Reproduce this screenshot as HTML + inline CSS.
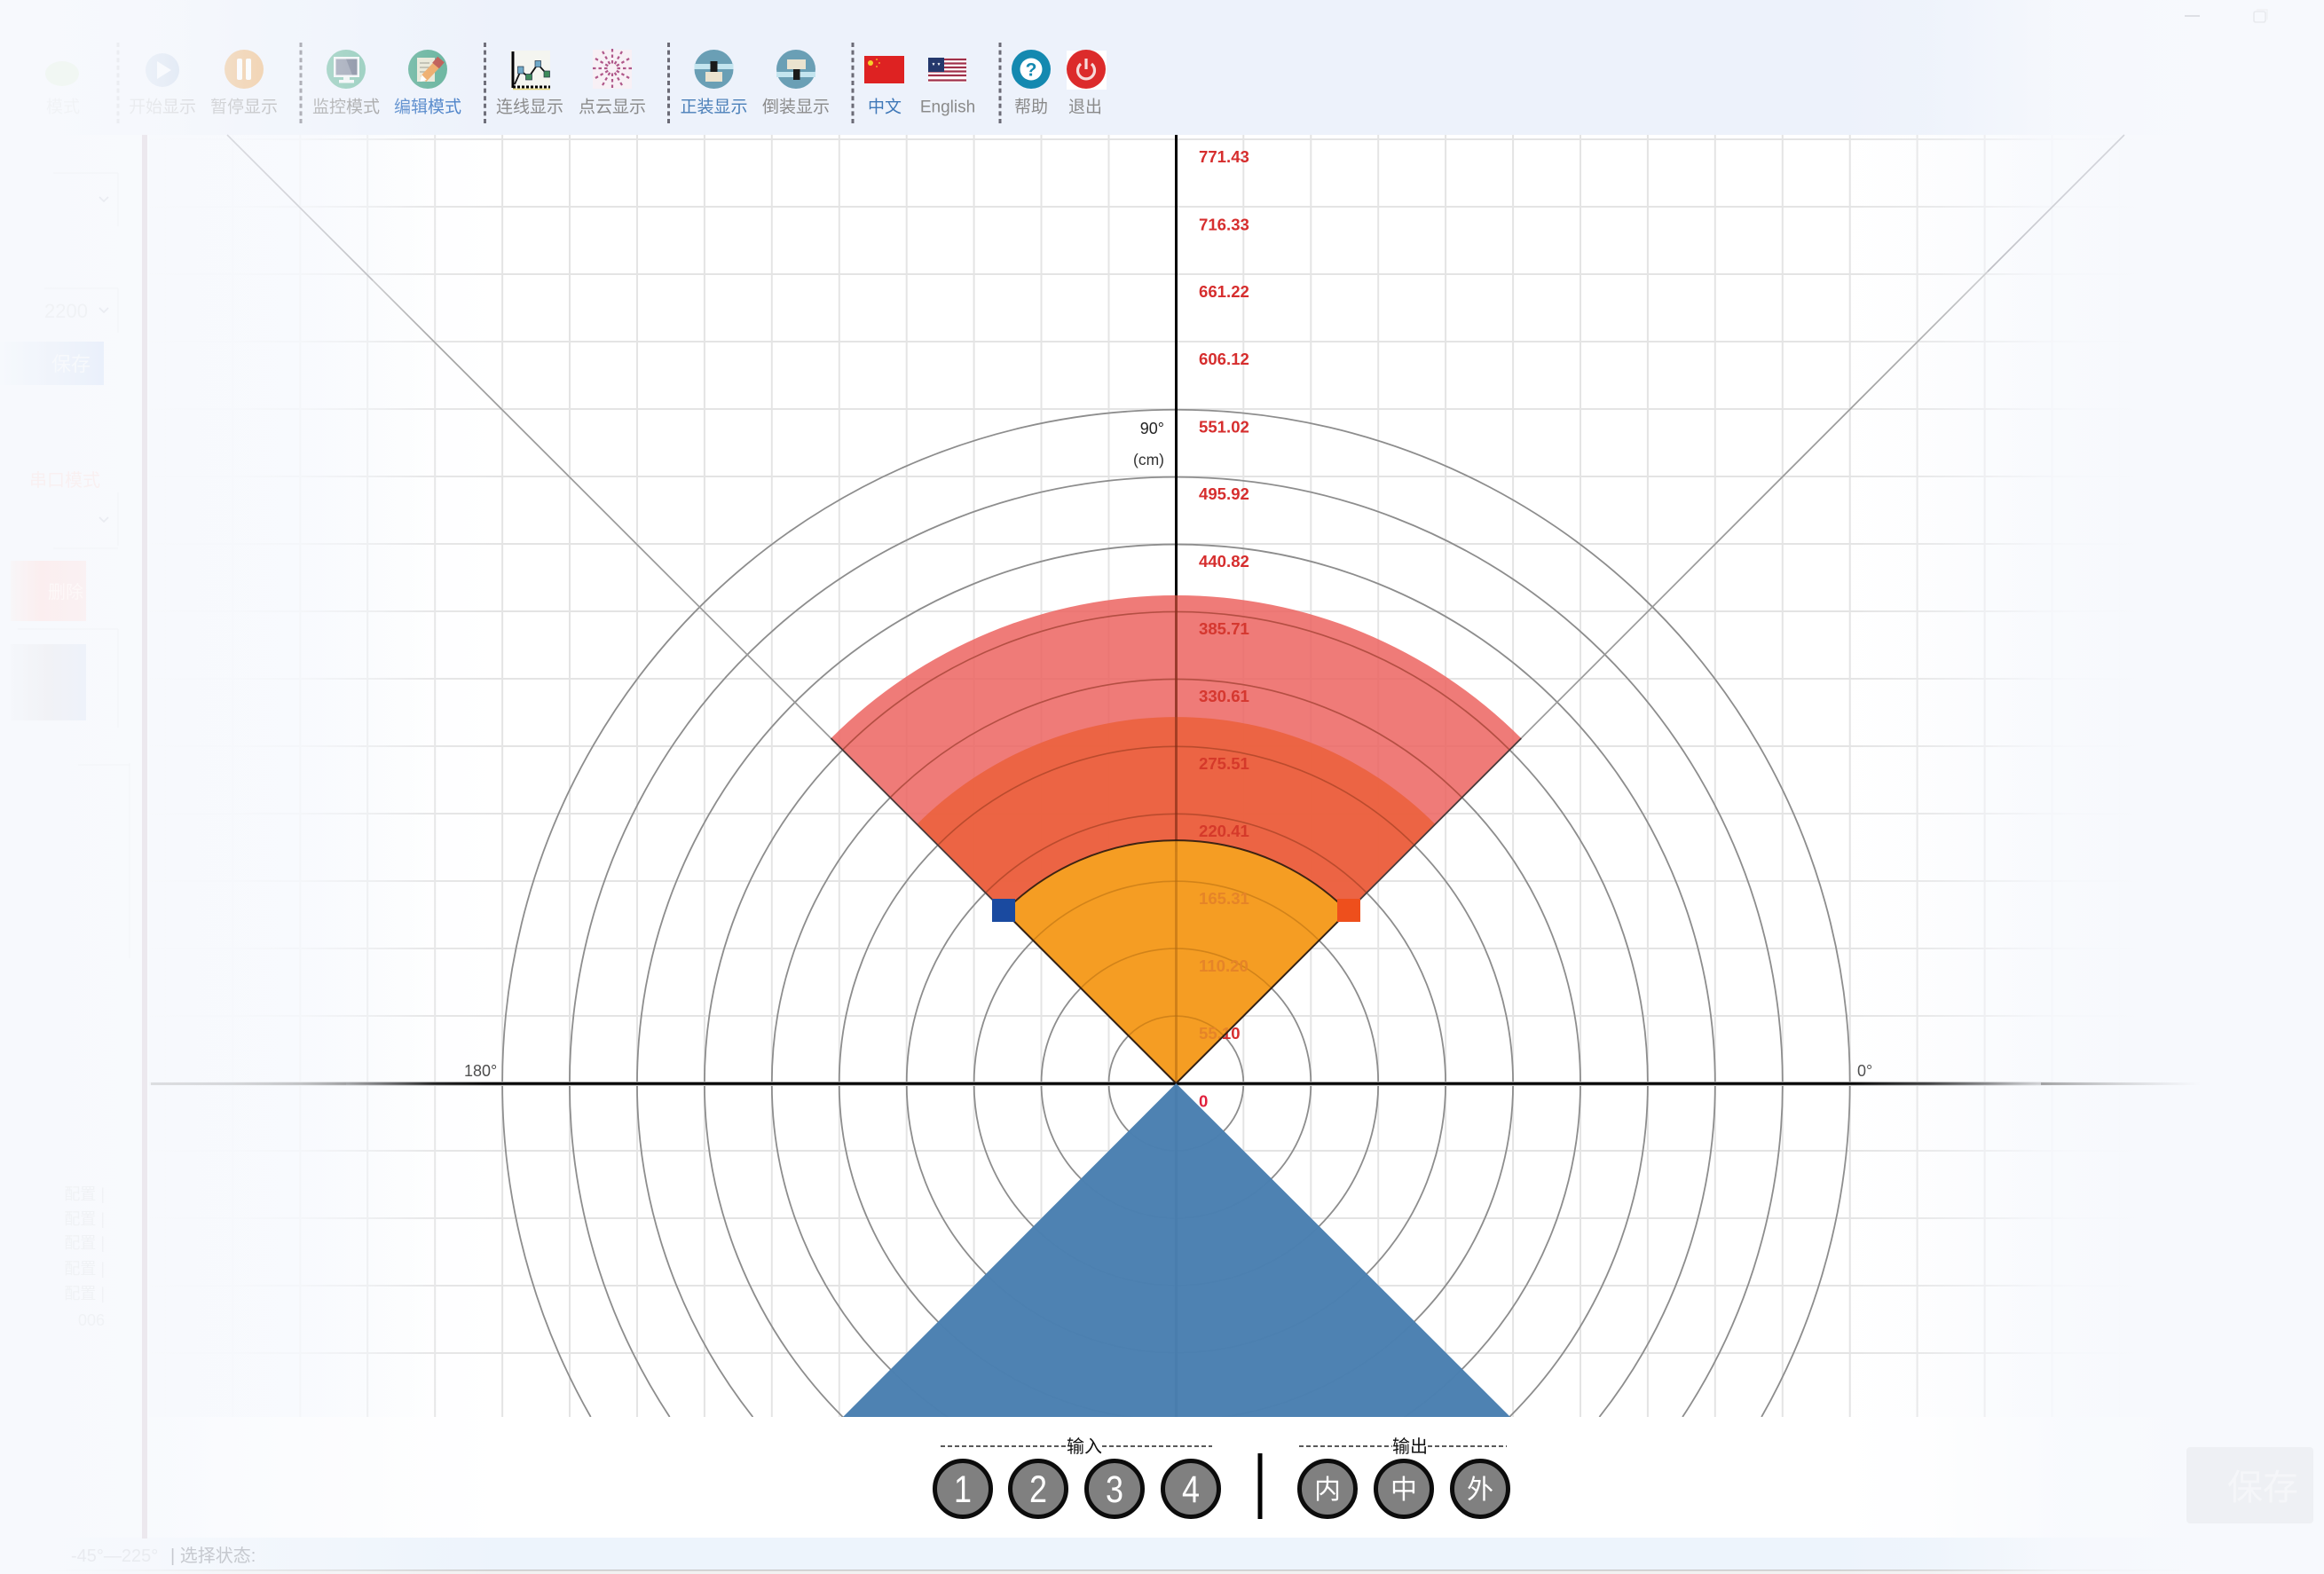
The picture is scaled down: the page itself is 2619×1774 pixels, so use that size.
<!DOCTYPE html>
<html lang="zh-CN">
<head>
<meta charset="utf-8">
<title>雷达显示</title>
<style>
html,body{margin:0;padding:0;background:#f6f9fd;}
body{width:2619px;height:1774px;overflow:hidden;}
svg{display:block;}
text{font-family:"Liberation Sans","Noto Sans CJK SC",sans-serif;}
</style>
</head>
<body>
<svg xmlns="http://www.w3.org/2000/svg" width="2619" height="1774" viewBox="0 0 2619 1774">
<defs>
<clipPath id="chart"><rect x="168" y="152" width="2451" height="1445"/></clipPath>
<clipPath id="outerClip"><path d="M1325.4 1221L936.5 832.1A550 550 0 0 1 1714.3 832.1Z"/></clipPath>
<clipPath id="orangeClip"><path d="M1325.4 1221L1131.7 1027.3A274 274 0 0 1 1519.1 1027.3Z"/></clipPath>
<linearGradient id="fade" x1="0" y1="0" x2="2619" y2="0" gradientUnits="userSpaceOnUse">
<stop offset="0" stop-color="#f7f9fd" stop-opacity="1"/>
<stop offset="0.023" stop-color="#f7f9fd" stop-opacity=".98"/>
<stop offset="0.05" stop-color="#f7f9fd" stop-opacity=".92"/>
<stop offset="0.069" stop-color="#f7f9fd" stop-opacity=".84"/>
<stop offset="0.105" stop-color="#f7f9fd" stop-opacity=".6"/>
<stop offset="0.149" stop-color="#f7f9fd" stop-opacity=".4"/>
<stop offset="0.184" stop-color="#f7f9fd" stop-opacity=".16"/>
<stop offset="0.21" stop-color="#f7f9fd" stop-opacity=".03"/>
<stop offset="0.23" stop-color="#f7f9fd" stop-opacity="0"/>
<stop offset="0.79" stop-color="#f7f9fd" stop-opacity="0"/>
<stop offset="0.83" stop-color="#f7f9fd" stop-opacity=".17"/>
<stop offset="0.86" stop-color="#f7f9fd" stop-opacity=".5"/>
<stop offset="0.885" stop-color="#f7f9fd" stop-opacity=".8"/>
<stop offset="0.93" stop-color="#f7f9fd" stop-opacity=".96"/>
<stop offset="0.97" stop-color="#f7f9fd" stop-opacity="1"/>
<stop offset="1" stop-color="#f7f9fd" stop-opacity="1"/>
</linearGradient>
<linearGradient id="fade2" x1="0" y1="0" x2="2619" y2="0" gradientUnits="userSpaceOnUse">
<stop offset="0.063" stop-color="#f7f9fd" stop-opacity=".9"/>
<stop offset="0.1" stop-color="#f7f9fd" stop-opacity=".86"/>
<stop offset="0.129" stop-color="#f7f9fd" stop-opacity=".7"/>
<stop offset="0.158" stop-color="#f7f9fd" stop-opacity=".33"/>
<stop offset="0.187" stop-color="#f7f9fd" stop-opacity="0"/>
<stop offset="0.796" stop-color="#f7f9fd" stop-opacity="0"/>
<stop offset="0.854" stop-color="#f7f9fd" stop-opacity=".2"/>
<stop offset="0.883" stop-color="#f7f9fd" stop-opacity=".5"/>
<stop offset="0.912" stop-color="#f7f9fd" stop-opacity=".8"/>
<stop offset="0.941" stop-color="#f7f9fd" stop-opacity="1"/>
</linearGradient>
<linearGradient id="axisEnd" x1="0" y1="0" x2="1" y2="0">
<stop offset="0" stop-color="#777" stop-opacity=".55"/>
<stop offset="1" stop-color="#999" stop-opacity="0"/>
</linearGradient>
<linearGradient id="btnBlue" x1="0" y1="0" x2="1" y2="0">
<stop offset="0" stop-color="#f6f9fd"/><stop offset=".5" stop-color="#f0f4fb"/><stop offset="1" stop-color="#eaf0fb"/>
</linearGradient>
<linearGradient id="btnRed" x1="0" y1="0" x2="1" y2="0">
<stop offset="0" stop-color="#f8f6f8"/><stop offset=".4" stop-color="#fbeeef"/><stop offset="1" stop-color="#faf1f3"/>
</linearGradient>
<linearGradient id="btnGray" x1="0" y1="0" x2="1" y2="0">
<stop offset="0" stop-color="#f5f7fb"/><stop offset=".5" stop-color="#f1f2f6"/><stop offset="1" stop-color="#eef2fa"/>
</linearGradient>
</defs>

<!-- base -->
<rect x="0" y="0" width="2619" height="1774" fill="#ffffff"/>

<g clip-path="url(#chart)">
<!-- grid -->
<path fill="none" stroke="#e4e4e4" stroke-width="2" d="M186.4 152V1597M262.4 152V1597M338.3 152V1597M414.2 152V1597M490.2 152V1597M566.1 152V1597M642 152V1597M718 152V1597M793.9 152V1597M869.8 152V1597M945.8 152V1597M1021.7 152V1597M1097.6 152V1597M1173.5 152V1597M1249.5 152V1597M1401.3 152V1597M1477.3 152V1597M1553.2 152V1597M1629.1 152V1597M1705.1 152V1597M1781 152V1597M1856.9 152V1597M1932.8 152V1597M2008.8 152V1597M2084.7 152V1597M2160.6 152V1597M2236.6 152V1597M2312.5 152V1597M2388.4 152V1597M2464.4 152V1597M2540.3 152V1597"/>
<path fill="none" stroke="#e4e4e4" stroke-width="2" d="M168 157H2619M168 233H2619M168 309H2619M168 385H2619M168 461H2619M168 537H2619M168 613H2619M168 689H2619M168 765H2619M168 841H2619M168 917H2619M168 993H2619M168 1069H2619M168 1145H2619M168 1297H2619M168 1373H2619M168 1449H2619M168 1525H2619"/>
<!-- rings -->
<g fill="none" stroke="#8d8d8d" stroke-width="1.8">
<circle cx="1325.4" cy="1221" r="75.9"/>
<circle cx="1325.4" cy="1221" r="151.9"/>
<circle cx="1325.4" cy="1221" r="227.8"/>
<circle cx="1325.4" cy="1221" r="303.7"/>
<circle cx="1325.4" cy="1221" r="379.7"/>
<circle cx="1325.4" cy="1221" r="455.6"/>
<circle cx="1325.4" cy="1221" r="531.5"/>
<path d="M848.4 1597A607.4 607.4 0 1 1 1802.4 1597"/>
<path d="M754.7 1597A683.4 683.4 0 1 1 1896.1 1597"/>
<path d="M665.7 1597A759.3 759.3 0 1 1 1985.1 1597"/>
</g>
<!-- diagonals -->
<path fill="none" stroke="#9a9a9a" stroke-width="1.7" d="M1325.4 1221L256 152M1325.4 1221L2394 152"/>
<!-- axes -->
<rect x="168" y="1219" width="2451" height="5" fill="#c8c8c8"/>
<rect x="168" y="1219.8" width="2451" height="3" fill="#000"/>
<rect x="1324" y="152" width="3" height="1445" fill="#000"/>

<!-- value labels -->
<g font-size="18.6" font-weight="700" fill="#d62e2e">
<text x="1351" y="183">771.43</text>
<text x="1351" y="259.5">716.33</text>
<text x="1351" y="335">661.22</text>
<text x="1351" y="411">606.12</text>
<text x="1351" y="487.5">551.02</text>
<text x="1351" y="563">495.92</text>
<text x="1351" y="639">440.82</text>
<text x="1351" y="715">385.71</text>
<text x="1351" y="791">330.61</text>
<text x="1351" y="867">275.51</text>
<text x="1351" y="943">220.41</text>
<text x="1351" y="1019">165.31</text>
<text x="1351" y="1095">110.20</text>
<text x="1351" y="1171">55.10</text>
<text x="1351" y="1247.5" fill="#e0203c">0</text>
</g>
<text x="1312" y="489" font-size="18" fill="#222" text-anchor="end">90°</text>
<text x="1312" y="524" font-size="17.5" fill="#333" text-anchor="end">(cm)</text>
<text x="523" y="1213" font-size="18" fill="#444">180°</text>
<text x="2093" y="1213" font-size="18" fill="#444">0°</text>

<!-- sectors -->
<path d="M1325.4 1221L936.5 832.1A550 550 0 0 1 1714.3 832.1Z" fill="rgb(236,100,96)" fill-opacity=".85"/>
<path d="M1325.4 1221L1033.4 929A413 413 0 0 1 1617.4 929Z" fill="rgb(235,96,59)" fill-opacity=".85"/>
<g clip-path="url(#outerClip)">
<g fill="none" stroke="#7a2a14" stroke-width="1.6" stroke-opacity=".42">
<circle cx="1325.4" cy="1221" r="303.7"/>
<circle cx="1325.4" cy="1221" r="379.7"/>
<circle cx="1325.4" cy="1221" r="455.6"/>
<circle cx="1325.4" cy="1221" r="531.5"/>
</g>
<rect x="1324" y="660" width="3" height="300" fill="#7a2a14" fill-opacity=".6"/>
<g font-size="18.6" font-weight="700" fill="#cf3026" fill-opacity=".8">
<text x="1351" y="715">385.71</text>
<text x="1351" y="791">330.61</text>
<text x="1351" y="867">275.51</text>
<text x="1351" y="943">220.41</text>
</g>
</g>
<path d="M1325.4 1221L936.5 832.1M1325.4 1221L1714.3 832.1" fill="none" stroke="#4a3a3a" stroke-width="1.8"/>
<path d="M1325.4 1221L1131.7 1027.3A274 274 0 0 1 1519.1 1027.3Z" fill="rgb(245,160,33)" fill-opacity=".94"/>
<g clip-path="url(#orangeClip)">
<g fill="none" stroke="#b06a10" stroke-width="1.6" stroke-opacity=".5">
<circle cx="1325.4" cy="1221" r="75.9"/>
<circle cx="1325.4" cy="1221" r="151.9"/>
<circle cx="1325.4" cy="1221" r="227.8"/>
</g>
<rect x="1324" y="940" width="3" height="285" fill="#b06a10" fill-opacity=".55"/>
<g font-size="18.6" font-weight="700" fill="#e58428">
<text x="1351" y="1019">165.31</text>
<text x="1351" y="1095">110.20</text>
<text x="1351" y="1171">55.10</text>
</g>
</g>
<path d="M1325.4 1221L1131.7 1027.3A274 274 0 0 1 1519.1 1027.3Z" fill="none" stroke="#2a1a10" stroke-width="2" stroke-opacity=".9"/>
<rect x="1118" y="1013" width="26" height="26" fill="#1a4aa0"/>
<rect x="1507" y="1013" width="26" height="26" fill="#ee4f1c"/>
<!-- blue triangle -->
<path d="M1325.4 1221L950 1597H1702Z" fill="#4a80b0" fill-opacity=".98"/>
</g>

<!-- bottom panel -->
<rect x="0" y="1597" width="2619" height="136" fill="#ffffff"/>
<rect x="0" y="1733" width="2619" height="36" fill="#edf4fc"/>
<rect x="0" y="1769" width="2619" height="1.5" fill="#c9c9c9"/>
<rect x="0" y="1770.5" width="2619" height="3.5" fill="#f1f1f1"/>

<!-- input / output legend -->
<path d="M1060 1630H1202M1242 1630H1366M1464 1630H1569M1609 1630H1698" stroke="#222" stroke-width="1.6" stroke-dasharray="5 3" fill="none"/>
<text x="1222" y="1637" font-size="20" fill="#111" text-anchor="middle">输入</text>
<text x="1589" y="1637" font-size="20" fill="#111" text-anchor="middle">输出</text>
<g fill="#808080" stroke="#0c0c0c" stroke-width="5">
<circle cx="1085" cy="1678" r="31.5"/>
<circle cx="1170" cy="1678" r="31.5"/>
<circle cx="1256" cy="1678" r="31.5"/>
<circle cx="1342" cy="1678" r="31.5"/>
<circle cx="1496" cy="1678" r="31.5"/>
<circle cx="1582" cy="1678" r="31.5"/>
<circle cx="1668" cy="1678" r="31.5"/>
</g>
<g fill="#fff" font-size="43">
<text x="1075" y="1693" textLength="20" lengthAdjust="spacingAndGlyphs">1</text>
<text x="1160" y="1693" textLength="20" lengthAdjust="spacingAndGlyphs">2</text>
<text x="1246" y="1693" textLength="20" lengthAdjust="spacingAndGlyphs">3</text>
<text x="1332" y="1693" textLength="20" lengthAdjust="spacingAndGlyphs">4</text>
</g>
<g fill="#fff" font-size="30" text-anchor="middle">
<text x="1496" y="1689">内</text>
<text x="1582" y="1689">中</text>
<text x="1668" y="1689">外</text>
</g>
<rect x="1417.5" y="1638" width="5" height="74" fill="#000"/>

<!-- extra chart wash -->
<rect x="168" y="152" width="2451" height="1445" fill="url(#fade2)"/>

<!-- toolbar -->
<rect x="0" y="0" width="2619" height="152" fill="#edf2fb"/>
<path d="M133 48V139M339 48V139M546.5 48V139M753.5 48V139M961 48V139M1127 48V139" stroke="#6b6b76" stroke-width="3" stroke-dasharray="5 3.6" fill="none"/>

<!-- play -->
<circle cx="183" cy="79" r="19" fill="#9cb6d8"/>
<path d="M177 69L193 79L177 89Z" fill="#fff"/>
<!-- pause -->
<circle cx="275" cy="78" r="22" fill="#eaa85c"/>
<rect x="267" y="66" width="6" height="24" rx="2" fill="#fff"/>
<rect x="277" y="66" width="6" height="24" rx="2" fill="#fff"/>
<!-- monitor -->
<circle cx="390" cy="78" r="22" fill="#73bda5"/>
<rect x="376" y="64" width="29" height="23" fill="#f3f6f6"/>
<rect x="378.5" y="66.5" width="24" height="18" fill="#828a9e"/>
<path d="M390 66.5H402.5V84.5H397Z" fill="#5f6880"/>
<rect x="387" y="87" width="7" height="3.5" fill="#eef3f2"/>
<rect x="382" y="90" width="17" height="3.5" fill="#f3f6f6"/>
<!-- edit -->
<circle cx="482" cy="78" r="22" fill="#5cae96"/>
<rect x="470" y="65" width="20" height="27" fill="#e8e6d4"/>
<path d="M473 71H484M473 76H484M473 81H480" stroke="#a9a99a" stroke-width="1.4"/>
<path d="M477 89L496 69" stroke="#eda35a" stroke-width="9"/>
<path d="M491 74L497 67" stroke="#b84c44" stroke-width="10"/>
<path d="M473.5 92L475 84L481 90Z" fill="#fff"/>
<!-- line chart -->
<rect x="575" y="57" width="45" height="44" fill="#f4f5f0"/>
<path d="M578 58V99" stroke="#000" stroke-width="3"/>
<path d="M578 98H620" stroke="#000" stroke-width="3" stroke-dasharray="3 2"/>
<path d="M578 100.5H620" stroke="#e8d878" stroke-width="1.4"/>
<path d="M580 95L586.7 80L596 86.7L606 72.3L616 83.3" fill="none" stroke="#111" stroke-width="1.8"/>
<rect x="583.5" y="75" width="6.5" height="8" fill="#6fa8c8" stroke="#234" stroke-width=".7"/>
<rect x="592.5" y="83.5" width="7" height="6.5" fill="#3d8b5b" stroke="#234" stroke-width=".7"/>
<rect x="603" y="68.5" width="6.5" height="7" fill="#6fa8c8" stroke="#234" stroke-width=".7"/>
<rect x="613" y="80" width="6.5" height="7" fill="#3d8b5b" stroke="#234" stroke-width=".7"/>
<!-- point cloud -->
<rect x="668" y="56" width="44" height="44" fill="#f8f0f5"/>
<g stroke="#b0588a" stroke-width="2.2" stroke-dasharray="3.5 3" fill="none" transform="translate(690 77)">
<path d="M0 -22V-5"/><path d="M0 -22V-5" transform="rotate(30)"/><path d="M0 -22V-5" transform="rotate(60)"/><path d="M0 -22V-5" transform="rotate(90)"/><path d="M0 -22V-5" transform="rotate(120)"/><path d="M0 -22V-5" transform="rotate(150)"/><path d="M0 -22V-5" transform="rotate(180)"/><path d="M0 -22V-5" transform="rotate(210)"/><path d="M0 -22V-5" transform="rotate(240)"/><path d="M0 -22V-5" transform="rotate(270)"/><path d="M0 -22V-5" transform="rotate(300)"/><path d="M0 -22V-5" transform="rotate(330)"/>
</g>
<!-- upright mount -->
<circle cx="804.5" cy="78" r="22" fill="#6a9fb5"/>
<rect x="782.5" y="72" width="44" height="6" fill="#c4e5ef"/>
<rect x="800.5" y="69" width="8" height="12" fill="#1a1a1a"/>
<rect x="795" y="81" width="19" height="11" fill="#ebe3cf"/>
<!-- inverted mount -->
<circle cx="897" cy="78" r="22" fill="#6a9fb5"/>
<rect x="875" y="81" width="44" height="6" fill="#c4e5ef"/>
<rect x="894" y="76" width="7.5" height="14" fill="#1a1a1a"/>
<rect x="887" y="67" width="21" height="11" fill="#ebe3cf"/>
<!-- CN flag -->
<rect x="974" y="63" width="45" height="31" fill="#de2222"/>
<circle cx="981" cy="71" r="3" fill="#f6d02a"/>
<circle cx="988" cy="67" r=".9" fill="#f6d02a"/>
<circle cx="991" cy="71" r=".9" fill="#f6d02a"/>
<circle cx="988" cy="75" r=".9" fill="#f6d02a"/>
<!-- US flag -->
<rect x="1046" y="65" width="43" height="28" fill="#fff"/>
<path d="M1046 67H1089M1046 71.5H1089M1046 76H1089M1046 80.500H1089M1046 85H1089M1046 90.500H1089" stroke="#a0304a" stroke-width="2.2"/>
<rect x="1046" y="65" width="18" height="16" fill="#24386c"/>
<path d="M1051 71l1 2 1-2M1057 71l1 2 1-2" stroke="#fff" stroke-width="1" fill="none"/>
<!-- help -->
<circle cx="1162" cy="78" r="22" fill="#1489b0"/>
<circle cx="1162" cy="78" r="12.5" fill="#fff"/>
<text x="1162" y="85.500" font-size="21" font-weight="700" fill="#1489b0" text-anchor="middle">?</text>
<!-- exit -->
<rect x="1202" y="57" width="45" height="44" fill="#fff"/>
<circle cx="1224" cy="78" r="22" fill="#dc2b2b"/>
<path d="M1218 72A9.500 9.500 0 1 0 1230 72" fill="none" stroke="#f6dada" stroke-width="3.2"/>
<path d="M1224 66V78" stroke="#f6dada" stroke-width="3.2"/>

<!-- toolbar labels -->
<g font-size="19" text-anchor="middle" fill="#8a8a8a">
<text x="183" y="126.500">开始显示</text>
<text x="275" y="126.500">暂停显示</text>
<text x="390" y="126.500">监控模式</text>
<text x="482" y="126.500" fill="#3d78c4">编辑模式</text>
<text x="597" y="126.500">连线显示</text>
<text x="690" y="126.500">点云显示</text>
<text x="804.5" y="126.500" fill="#4a7fb8">正装显示</text>
<text x="897" y="126.500">倒装显示</text>
<text x="997" y="126.500" fill="#3f78b8">中文</text>
<text x="1068" y="126.500">English</text>
<text x="1162" y="126.500">帮助</text>
<text x="1223" y="126.500">退出</text>
</g>

<!-- wash overlay -->
<rect x="0" y="0" width="2619" height="1774" fill="url(#fade)"/>

<!-- residual diagonals and axis in faded areas -->
<path d="M256 152L420 316" stroke="#a8a8b2" stroke-width="1.6" stroke-opacity=".35" fill="none"/>
<path d="M2394 152L2240 306" stroke="#a8a8b2" stroke-width="1.6" stroke-opacity=".45" fill="none"/>
<rect x="2300" y="1220" width="180" height="3" fill="url(#axisEnd)"/>
<rect x="170" y="1220" width="220" height="3" fill="#8a8a8a" fill-opacity=".22"/>

<!-- faded left panel -->
<rect x="160" y="152" width="6" height="1582" fill="#ece8ee"/>
<ellipse cx="70" cy="83" rx="19" ry="14" fill="#f1f7f3"/>
<text x="71" y="126.500" font-size="19" fill="#f1f3f6" text-anchor="middle">模式</text>
<path d="M112 222l5 5l5-5M112 347l5 5l5-5M112 583l5 5l5-5" fill="none" stroke="#eaecf1" stroke-width="1.6"/>
<path d="M133 195V255M60 195H133M133 325V375M50 325H133M133 555V615M60 618H133M133 709V820M20 709H133M146 860V1080M88 862H146" fill="none" stroke="#f3f5f8" stroke-width="1.2"/>
<text x="50" y="358" font-size="22" fill="#f0f2f5">2200</text>
<rect x="0" y="385" width="117" height="49" fill="url(#btnBlue)"/>
<text x="58" y="418" font-size="22" fill="#f7f9fc">保存</text>
<text x="33" y="548" font-size="20" fill="#f9f0f1">串口模式</text>
<rect x="12" y="632" width="85" height="68" fill="url(#btnRed)"/>
<text x="54" y="674" font-size="20" fill="#fdf8f8">删除</text>
<rect x="12" y="726" width="85" height="86" fill="url(#btnGray)"/>
<g font-size="18" fill="#f0f2f5" text-anchor="end">
<text x="118" y="1352">配置 |</text>
<text x="118" y="1380">配置 |</text>
<text x="118" y="1407">配置 |</text>
<text x="118" y="1436">配置 |</text>
<text x="118" y="1464">配置 |</text>
<text x="118" y="1494">006</text>
</g>

<!-- status text -->
<text x="80" y="1760" font-size="20" fill="#e9ebf0">-45°—225°</text>
<text x="192" y="1760" font-size="20" fill="#c6c9cf">| 选择状态:</text>

<!-- window controls -->
<rect x="2462" y="17" width="17" height="2" fill="#dee0e5"/>
<rect x="2540" y="13" width="13" height="12" rx="2" fill="none" stroke="#e8eaee" stroke-width="1.6"/>
<path d="M2543 11H2555V22" fill="none" stroke="#eef0f3" stroke-width="1.2"/>

<!-- save button -->
<rect x="2464" y="1631" width="143" height="86" rx="4" fill="#eef0f4"/>
<text x="2550" y="1690" font-size="40" fill="#f5f6f9" text-anchor="middle">保存</text>
</svg>
</body>
</html>
